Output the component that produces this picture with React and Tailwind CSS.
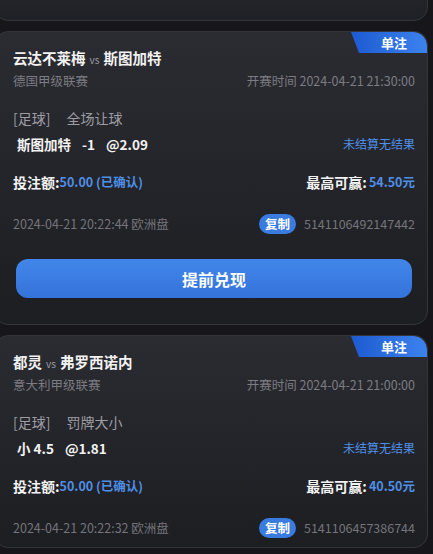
import React from 'react';

const font = { fontFamily: '"Noto Sans CJK SC", "Noto Sans", sans-serif' };

const bets = [
  {
    home: '云达不莱梅',
    away: '斯图加特',
    league: '德国甲级联赛',
    start: '2024-04-21 21:30:00',
    market: '全场让球',
    pick: ['斯图加特', '-1', '@2.09'],
    win: '54.50元',
    placed: '2024-04-21 20:22:44 欧洲盘',
    orderNo: '5141106492147442',
    cashout: true,
  },
  {
    home: '都灵',
    away: '弗罗西诺内',
    league: '意大利甲级联赛',
    start: '2024-04-21 21:00:00',
    market: '罚牌大小',
    pick: ['小 4.5', '@1.81'],
    win: '40.50元',
    placed: '2024-04-21 20:22:32 欧洲盘',
    orderNo: '5141106457386744',
    cashout: false,
  },
];

function Badge() {
  return (
    <div className="absolute top-0 right-0 w-[76px] h-[21px] rounded-tr-[14px] bg-gradient-to-r from-[#1d5ad0] to-[#3c82ee] [clip-path:polygon(0_0,100%_0,100%_100%,8px_100%)] flex items-center justify-end pr-[20px]">
      <span className="text-[13px] font-bold text-white leading-none">单注</span>
    </div>
  );
}

function BetCard({ bet }) {
  return (
    <div
      className={`relative -ml-[6px] rounded-[14px] border border-[#34353b] bg-gradient-to-b from-[#2b2c32] to-[#1d1e22] overflow-hidden pl-[18px] pr-[12px] pt-[15px] ${
        bet.cashout ? 'pb-[26px]' : 'pb-[9px]'
      }`}
    >
      <Badge />
      <div className="flex items-baseline h-[20px] text-[14.5px] font-bold text-[#f2f2f2]">
        <span>{bet.home}</span>
        <span className="mx-[4px] text-[10px] font-normal text-[#9a9aa0]">vs</span>
        <span>{bet.away}</span>
      </div>
      <div className="mt-[5px] flex items-center justify-between h-[18px] text-[12.5px] text-[#7c7c82]">
        <span>{bet.league}</span>
        <span>开赛时间 {bet.start}</span>
      </div>
      <div className="mt-[18px] flex items-center h-[20px] text-[14px] text-[#9d9da3]">
        <span>[足球]</span>
        <span className="ml-[16px]">{bet.market}</span>
      </div>
      <div className="mt-[6px] flex items-center justify-between h-[20px]">
        <div className="flex items-center gap-[11px] pl-[4px] text-[13.5px] font-semibold text-[#f2f2f2]">
          {bet.pick.map((p) => (
            <span key={p}>{p}</span>
          ))}
        </div>
        <span className="text-[12px] text-[#4f8fe6]">未结算无结果</span>
      </div>
      <div className="mt-[18px] flex items-center justify-between h-[20px]">
        <div className="flex items-center">
          <span className="text-[14px] font-bold text-[#f2f2f2]">投注额:</span>
          <span className="text-[12.5px] font-bold text-[#4f8fe6]">50.00 (已确认)</span>
        </div>
        <div className="flex items-center">
          <span className="text-[14px] font-bold text-[#f2f2f2]">最高可赢:</span>
          <span className="ml-[2px] text-[12.5px] font-bold text-[#4f8fe6]">{bet.win}</span>
        </div>
      </div>
      <div className="mt-[22px] flex items-center justify-between h-[20px] text-[12.5px] text-[#74747a]">
        <span>{bet.placed}</span>
        <div className="flex items-center gap-[8px]">
          <span className="h-[20px] w-[37px] rounded-full bg-[#3a7be0] text-white font-bold flex items-center justify-center leading-none">
            复制
          </span>
          <span>{bet.orderNo}</span>
        </div>
      </div>
      {bet.cashout && (
        <div className="mt-[25px] mx-[3px] h-[39px] rounded-[12px] bg-gradient-to-b from-[#4286ea] to-[#3473da] flex items-center justify-center text-[16px] font-bold text-white">
          提前兑现
        </div>
      )}
    </div>
  );
}

export default function App() {
  return (
    <div className="min-h-[554px] w-[433px] bg-[#17171b] pr-[5px] overflow-hidden" style={font}>
      <div className="-mt-[20px] -ml-[6px] h-[41px] rounded-[14px] border border-[#34353b] bg-gradient-to-b from-[#26272c] to-[#202126]" />
      <div className="mt-[10px] flex flex-col gap-[10px]">
        {bets.map((b) => (
          <BetCard key={b.orderNo} bet={b} />
        ))}
      </div>
    </div>
  );
}
